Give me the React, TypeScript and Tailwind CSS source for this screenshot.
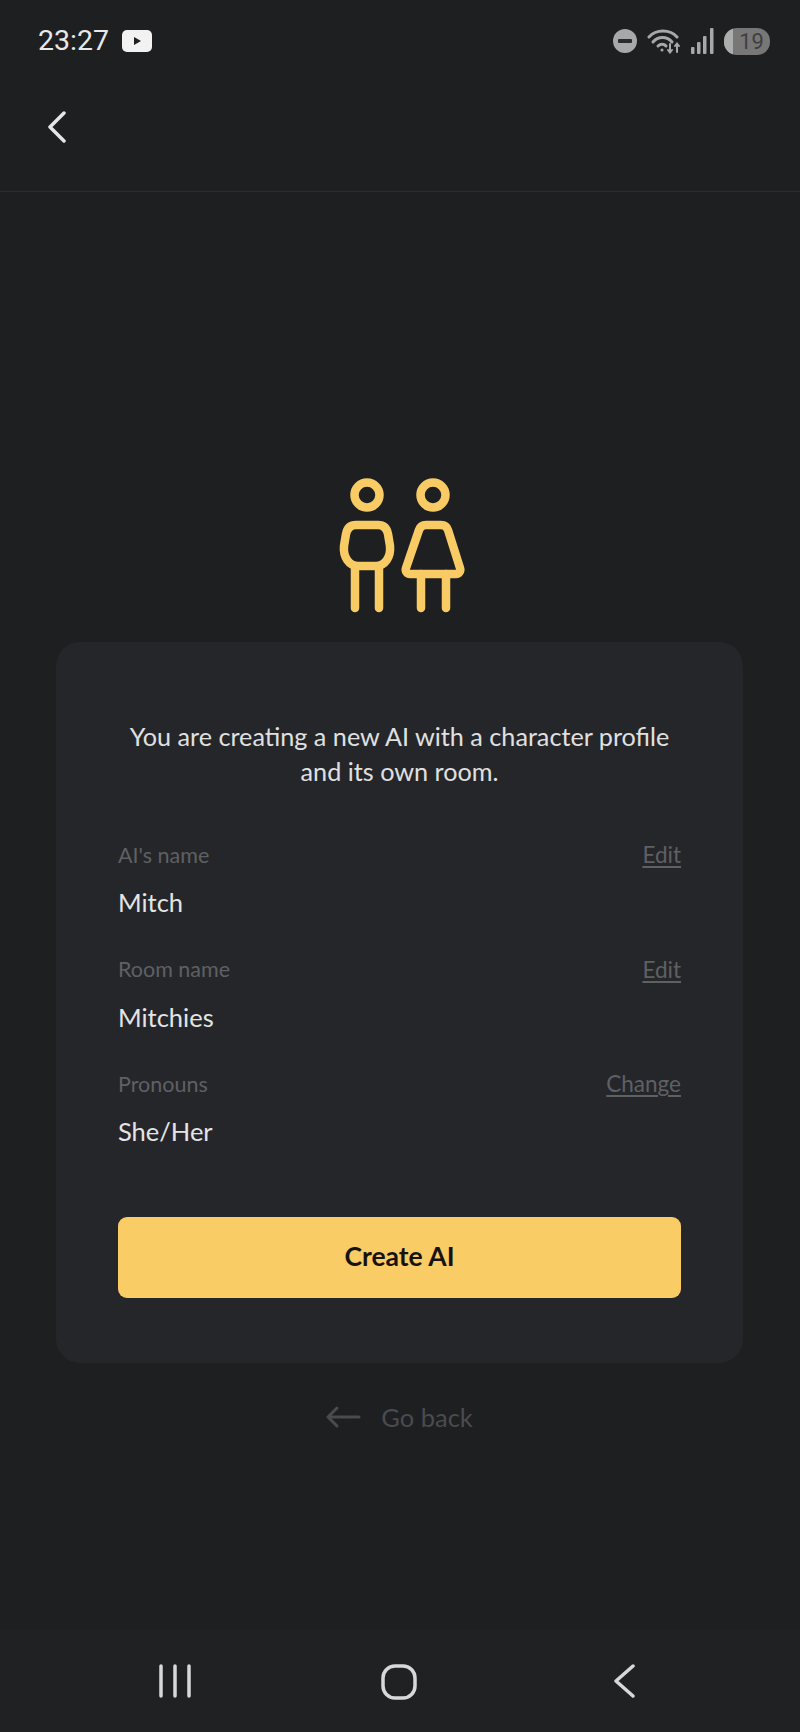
import React from "react";

const font = { fontFamily: '"Lato", "Noto Sans", sans-serif' };

function CoupleIcon() {
  return (
    <svg width="200" height="170" viewBox="0 0 200 170" fill="none" stroke="#f8cb65" strokeWidth="8.5" strokeLinecap="round" strokeLinejoin="round">
      <circle cx="67" cy="35" r="12.5" />
      <circle cx="133" cy="35" r="12.5" />
      <path d="M56 65H78C84 65 87 69 88 74L90 86C91 97 85 106 76 106H58C49 106 43 97 44 86L46 74C47 69 50 65 56 65Z" />
      <path d="M55 106V148M79 106V148" />
      <path d="M126 65H141C145 65 147 67 148 70L160 108C161 111 159 114 156 114H110C107 114 105 111 106 108L119 70C120 67 122 65 126 65Z" />
      <path d="M121 114V148M146 114V148" />
    </svg>
  );
}

function Field({ label, value, action }: { label: string; value: string; action: string }) {
  return (
    <div className="h-[114.5px] pt-[2px]">
      <div className="flex justify-between items-center h-[28px] text-[21.500px] text-[#5f6063]">
        <span>{label}</span>
        <span className="text-[22.500px] underline underline-offset-[3px]">{action}</span>
      </div>
      <div className="mt-[19px] h-[28px] leading-[28px] text-[25.500px] text-[#e4e4e4]">{value}</div>
    </div>
  );
}

export default function App() {
  return (
    <div className="w-[800px] h-[1732px] bg-[#1e1f21] flex flex-col overflow-hidden" style={font}>
      {/* status bar */}
      <div className="h-[82px] pl-[38px] pr-[30px] flex items-center justify-between">
        <div className="flex items-center gap-[13px]">
          <span className="text-[28.500px] text-[#e8e8e8]" style={{ fontFamily: "Roboto, sans-serif" }}>23:27</span>
          <svg width="30" height="22" viewBox="0 0 30 22">
            <rect width="30" height="22" rx="5" fill="#f2f2f2" />
            <path d="M12 7L19 11L12 15Z" fill="#1e1f21" />
          </svg>
        </div>
        <div className="flex items-center">
          <svg width="24" height="24" viewBox="0 0 24 24" className="mr-[10px]">
            <circle cx="12" cy="12" r="12" fill="#a8a8a8" />
            <rect x="5" y="10" width="14" height="4" rx="1" fill="#2a2b2d" />
          </svg>
          <svg width="34" height="26" viewBox="0 0 34 26" fill="none" stroke="#a8a8a8" strokeWidth="3" strokeLinecap="round" className="mr-[9px]">
            <path d="M2 9C9 1 23 1 30 9" />
            <path d="M6 14C11 8 20 8 25 14" />
            <path d="M11 18C13.500 15.500 17 15.500 19 18" />
            <circle cx="15" cy="22" r="1.500" fill="#a8a8a8" stroke="none" />
            <path d="M23 16V24M21 22L23 24.500L25 22M30 24V16M28 18L30 15.500L32 18" strokeWidth="2" />
          </svg>
          <svg width="24" height="26" viewBox="0 0 24 26" fill="#a8a8a8" className="mr-[10px]">
            <rect x="1" y="19" width="3.500" height="7" rx="1" />
            <rect x="7" y="14" width="3.500" height="12" rx="1" />
            <rect x="13" y="8" width="3.500" height="18" rx="1" />
            <rect x="20" y="0" width="3.500" height="26" rx="1" />
          </svg>
          <div className="w-[46px] h-[27px] rounded-[13px] overflow-hidden bg-[#777777] flex">
            <div className="w-[9px] h-full bg-[#adadad]" />
            <span className="flex-1 text-center text-[22px] leading-[27px] text-[#3f3f40]" style={{ fontFamily: "Roboto, sans-serif" }}>19</span>
          </div>
        </div>
      </div>

      {/* top bar */}
      <div className="h-[110px] border-b border-[#2c2d2f] pl-[47px] pt-[29px]">
        <svg width="20" height="32" viewBox="0 0 20 32" fill="none" stroke="#e6e6e6" strokeWidth="3.500" strokeLinecap="round" strokeLinejoin="round">
          <path d="M17 2L3 16L17 30" />
        </svg>
      </div>

      <div className="flex-1 flex flex-col items-center">
        <div className="mt-[268px] h-[170px]">
          <CoupleIcon />
        </div>
        <div className="mt-[12px] mr-[1px] w-[687px] h-[721px] rounded-[24px] bg-[#25262a] px-[62px] pt-[77px]">
          <p className="text-center text-[25.200px] leading-[35px] text-[#e0e0e0]">
            You are creating a new AI with a character profile
            <br />
            and its own room.
          </p>
          <div className="mt-[50px]">
            <Field label="AI's name" value="Mitch" action="Edit" />
            <Field label="Room name" value="Mitchies" action="Edit" />
            <Field label="Pronouns" value="She/Her" action="Change" />
          </div>
          <button className="mt-[34px] w-full h-[81px] rounded-[9px] bg-[#f9cc66] text-[26.500px] font-bold text-[#17130c]">
            Create AI
          </button>
        </div>
        <div className="mt-[35px] mr-[2px] flex items-center gap-[20px] text-[25.500px] text-[#4a4b4e]">
          <svg width="36" height="24" viewBox="0 0 36 24" fill="none" stroke="#4a4b4e" strokeWidth="3" strokeLinecap="round" strokeLinejoin="round">
            <path d="M34 12H3M12 3L3 12L12 21" />
          </svg>
          <span>Go back</span>
        </div>
      </div>

      {/* android nav */}
      <div className="h-[102px] bg-[#202123] flex items-start pt-[34px] pl-[159px]">
        <svg width="32" height="34" viewBox="0 0 32 34" fill="none" stroke="#d8d8d8" strokeWidth="3.500" strokeLinecap="round">
          <path d="M2 2V32M16 2V32M30 2V32" />
        </svg>
        <svg width="36" height="36" viewBox="0 0 36 36" fill="none" stroke="#d8d8d8" strokeWidth="3.500" className="ml-[190px]">
          <rect x="2" y="2" width="32" height="32" rx="12" />
        </svg>
        <svg width="24" height="34" viewBox="0 0 24 34" fill="none" stroke="#d8d8d8" strokeWidth="3.500" strokeLinecap="round" strokeLinejoin="round" className="ml-[195px]">
          <path d="M21 2L4 17L21 32" />
        </svg>
      </div>
    </div>
  );
}
